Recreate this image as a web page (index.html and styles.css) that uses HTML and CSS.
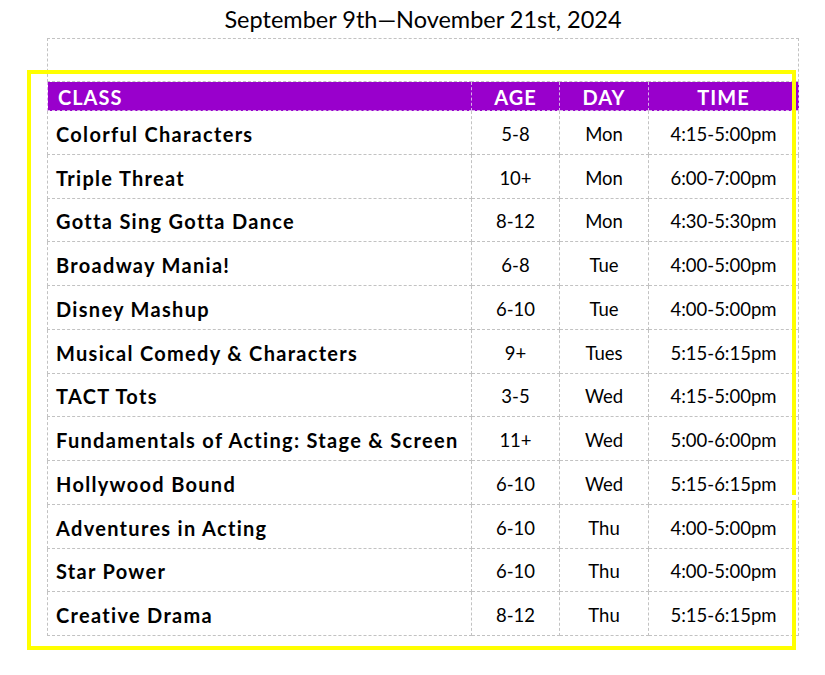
FILE: index.html
```html
<!DOCTYPE html>
<html>
<head>
<meta charset="utf-8">
<link rel="stylesheet" href="styles.css">
</head>
<body>
<div class="page">
  <h1 class="title">September 9th—November 21st, 2024</h1>
  <table class="schedule">
    <colgroup>
      <col class="c-class">
      <col class="c-age">
      <col class="c-day">
      <col class="c-time">
    </colgroup>
    <tr class="blank"><td colspan="4"></td></tr>
    <tr class="head">
      <th class="left">CLASS</th>
      <th>AGE</th>
      <th>DAY</th>
      <th>TIME</th>
    </tr>
    <tr><td class="name">Colorful Characters</td><td>5-8</td><td>Mon</td><td>4:15-5:00pm</td></tr>
    <tr><td class="name">Triple Threat</td><td>10+</td><td>Mon</td><td>6:00-7:00pm</td></tr>
    <tr><td class="name">Gotta Sing Gotta Dance</td><td>8-12</td><td>Mon</td><td>4:30-5:30pm</td></tr>
    <tr><td class="name">Broadway Mania!</td><td>6-8</td><td>Tue</td><td>4:00-5:00pm</td></tr>
    <tr><td class="name">Disney Mashup</td><td>6-10</td><td>Tue</td><td>4:00-5:00pm</td></tr>
    <tr><td class="name">Musical Comedy &amp; Characters</td><td>9+</td><td>Tues</td><td>5:15-6:15pm</td></tr>
    <tr><td class="name">TACT Tots</td><td>3-5</td><td>Wed</td><td>4:15-5:00pm</td></tr>
    <tr><td class="name">Fundamentals of Acting: Stage &amp; Screen</td><td>11+</td><td>Wed</td><td>5:00-6:00pm</td></tr>
    <tr><td class="name">Hollywood Bound</td><td>6-10</td><td>Wed</td><td>5:15-6:15pm</td></tr>
    <tr><td class="name">Adventures in Acting</td><td>6-10</td><td>Thu</td><td>4:00-5:00pm</td></tr>
    <tr><td class="name">Star Power</td><td>6-10</td><td>Thu</td><td>4:00-5:00pm</td></tr>
    <tr><td class="name">Creative Drama</td><td>8-12</td><td>Thu</td><td>5:15-6:15pm</td></tr>
  </table>
  <div class="frame"></div>
  <div class="frame-gap"></div>
</div>
</body>
</html>
```

FILE: styles.css
```css
html, body {
  margin: 0;
  padding: 0;
  background: #fff;
}
body {
  font-family: "Lato", "Open Sans", sans-serif;
  color: #000;
}
.page {
  position: relative;
  width: 825px;
  height: 675px;
}
.title {
  margin: 0;
  height: 38px;
  line-height: 38px;
  text-align: center;
  font-size: 23.5px;
  font-weight: 400;
  padding-left: 21px;
}
.schedule {
  margin-left: 47px;
  width: 751px;
  border-collapse: collapse;
  table-layout: fixed;
}
.c-class { width: 424px; }
.c-age { width: 88px; }
.c-day { width: 89px; }
.c-time { width: 150px; }
.schedule td, .schedule th {
  border: 1px dashed #c2c2c2;
  padding: 3px 0 0;
  text-align: center;
  font-size: 18.5px;
  white-space: nowrap;
}
.schedule tr {
  height: 43.75px;
}
.schedule tr.blank {
  height: 43px;
}
.schedule tr.head {
  height: 29px;
}
.schedule th {
  padding: 1px 0 0;
  background: #9900cc;
  color: #fff;
  font-weight: 700;
  font-size: 20px;
  letter-spacing: 1px;
  border-color: #d9b3e8;
}
.schedule th.left {
  text-align: left;
  padding-left: 10px;
}
.schedule td.name {
  text-align: left;
  padding-left: 8px;
  font-weight: 700;
  font-size: 20px;
  letter-spacing: 1.3px;
}
.frame {
  position: absolute;
  left: 27px;
  top: 70px;
  width: 769px;
  height: 580px;
  box-sizing: border-box;
  border: 4px solid #ffff00;
}
.frame-gap {
  position: absolute;
  left: 792px;
  top: 495px;
  width: 4px;
  height: 5px;
  background: #fff;
}
```
